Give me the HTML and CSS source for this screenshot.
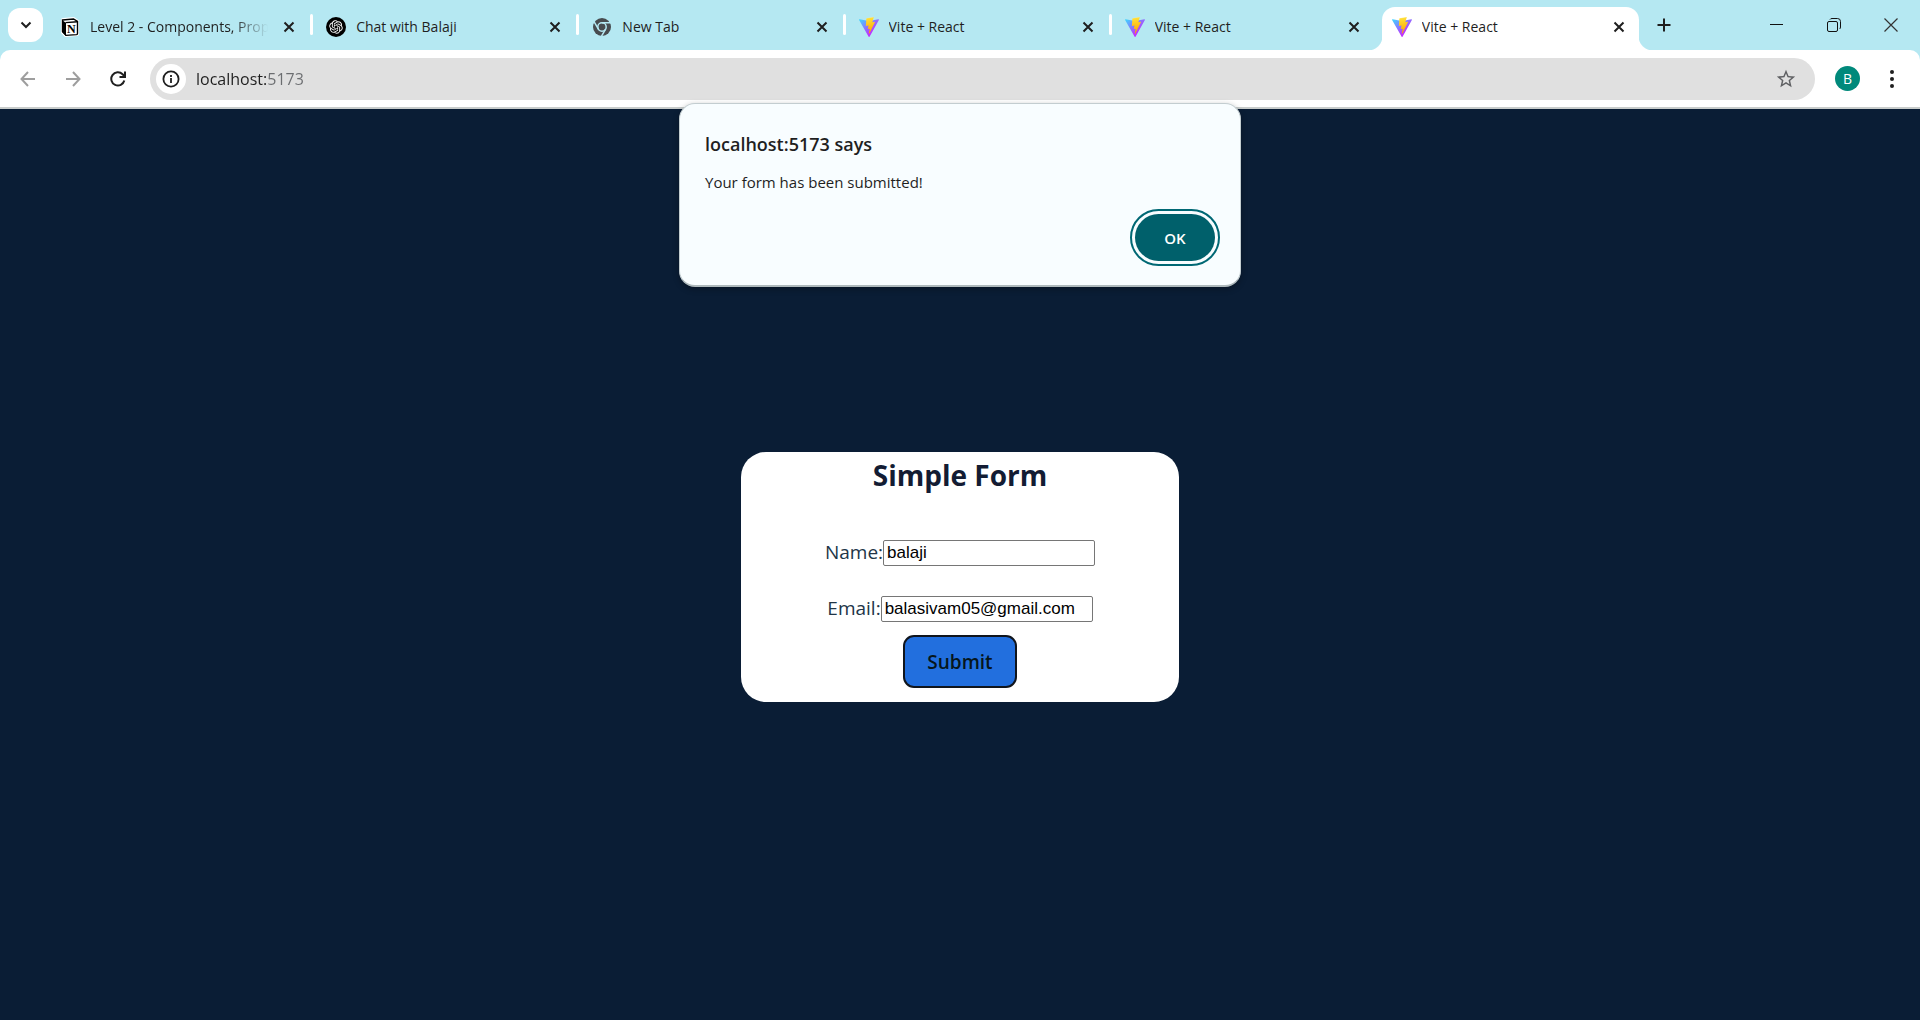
FILE: index.html
```html
<!DOCTYPE html>
<html lang="en">
<head>
<meta charset="utf-8">
<meta name="viewport" content="width=device-width, initial-scale=1">
<title>Vite + React</title>
<link rel="stylesheet" href="styles.css">
</head>
<body>
<svg class="defs" width="0" height="0" aria-hidden="true">
  <defs>
    <linearGradient id="vite-blue" x1="-1%" x2="58%" y1="8%" y2="78%"><stop offset="0" stop-color="#41d1ff"/><stop offset="1" stop-color="#bd34fe"/></linearGradient>
    <linearGradient id="vite-gold" x1="43%" x2="50%" y1="2%" y2="89%"><stop offset="0" stop-color="#ffea83"/><stop offset=".083" stop-color="#ffdd35"/><stop offset="1" stop-color="#ffa800"/></linearGradient>
    <symbol id="vite" viewBox="0 0 256 257">
      <path fill="url(#vite-blue)" d="M255.153 37.938L134.897 252.976c-2.483 4.44-8.862 4.466-11.382.048L.875 37.958c-2.746-4.814 1.371-10.646 6.827-9.67l120.385 21.517a6.537 6.537 0 0 0 2.322-.004l117.867-21.483c5.438-.991 9.574 4.796 6.877 9.62Z"/>
      <path fill="url(#vite-gold)" d="M185.432.063L96.44 17.501a3.268 3.268 0 0 0-2.634 3.014l-5.474 92.456a3.268 3.268 0 0 0 3.997 3.378l24.777-5.718c2.318-.535 4.413 1.507 3.936 3.838l-7.361 36.047c-.495 2.426 1.782 4.5 4.151 3.78l15.304-4.649c2.372-.72 4.652 1.36 4.15 3.788l-11.698 56.621c-.732 3.542 3.979 5.473 5.943 2.437l1.313-2.028l72.516-144.72c1.215-2.423-.88-5.186-3.54-4.672l-25.505 4.922c-2.396.462-4.435-1.77-3.759-4.114l16.646-57.705c.677-2.35-1.37-4.583-3.769-4.113Z"/>
    </symbol>
    <symbol id="cross" viewBox="0 0 12 12"><path d="M1.500 1.500l9 9M10.500 1.500l-9 9" fill="none" stroke="#1f1f1f" stroke-width="2"/></symbol>
  </defs>
</svg>

<header class="browser">
  <div class="tab-strip">
    <button class="tab-search" aria-label="Search tabs">
      <svg width="12" height="8" viewBox="0 0 12 8"><path d="M1.500 1.500L6 6l4.500-4.500" fill="none" stroke="#1f1f1f" stroke-width="2"/></svg>
    </button>
    <nav class="tabs">
      <div class="tab">
        <svg class="favicon" viewBox="0 0 20 20"><path d="M1 3Q1 1 3 1L14 0 19 3.500V17Q19 19 17 19L5 20 1 16Z" fill="#fff"/><path d="M2.500 3L13.500 2 17.500 4.500V16.500Q17.500 17.500 16.500 17.600L6 18.400 2.500 14.500Z" fill="#fff" stroke="#000" stroke-width="1.400"/><path d="M2 3L6 6V19L2 15Z" fill="#000"/><path d="M5.500 5.600L17.500 4.800" stroke="#000" stroke-width="1.400"/><text class="notion-letter" x="7" y="15.500">N</text></svg>
        <a class="tab-title faded" href="#">Level 2 - Components, Props</a>
        <button class="tab-close" aria-label="Close tab"><svg width="12" height="12"><use href="#cross"/></svg></button>
      </div>
      <div class="tab">
        <svg class="favicon" viewBox="0 0 40 40"><circle cx="20" cy="20" r="20" fill="#000"/><path transform="translate(6.500 6.500) scale(1.125)" fill="#fff" d="M22.282 9.821a5.985 5.985 0 0 0-.516-4.911 6.046 6.046 0 0 0-6.510-2.900A6.065 6.065 0 0 0 4.981 4.182a5.985 5.985 0 0 0-3.998 2.900 6.046 6.046 0 0 0 .743 7.097 5.980 5.980 0 0 0 .511 4.911 6.051 6.051 0 0 0 6.515 2.900A5.985 5.985 0 0 0 13.260 24a6.056 6.056 0 0 0 5.772-4.206 5.989 5.989 0 0 0 3.998-2.900 6.056 6.056 0 0 0-.748-7.073zm-9.022 12.608a4.476 4.476 0 0 1-2.876-1.041l.142-.080 4.778-2.758a.795.795 0 0 0 .393-.681v-6.737l2.020 1.169a.071.071 0 0 1 .038.052v5.583a4.504 4.504 0 0 1-4.495 4.494zm-9.661-4.125a4.471 4.471 0 0 1-.535-3.014l.142.085 4.783 2.758a.771.771 0 0 0 .781 0l5.843-3.369v2.332a.080.080 0 0 1-.033.062L9.740 19.950a4.499 4.499 0 0 1-6.141-1.646zM2.341 7.896a4.485 4.485 0 0 1 2.366-1.973V11.600a.766.766 0 0 0 .388.677l5.814 3.354-2.020 1.169a.076.076 0 0 1-.071 0l-4.830-2.787A4.504 4.504 0 0 1 2.341 7.872zm16.596 3.856L13.104 8.364 15.119 7.200a.076.076 0 0 1 .071 0l4.830 2.791a4.494 4.494 0 0 1-.677 8.104v-5.677a.790.790 0 0 0-.407-.667zm2.011-3.023l-.142-.085-4.774-2.782a.776.776 0 0 0-.785 0L9.409 9.230V6.897a.066.066 0 0 1 .028-.062l4.830-2.787a4.499 4.499 0 0 1 6.680 4.660zM8.307 12.863l-2.020-1.164a.080.080 0 0 1-.038-.057V6.074a4.499 4.499 0 0 1 7.376-3.454l-.142.081L8.704 5.459a.795.795 0 0 0-.393.681zm1.097-2.365l2.602-1.500 2.607 1.500v2.999l-2.597 1.500-2.607-1.500Z"/></svg>
        <a class="tab-title" href="#">Chat with Balaji</a>
        <button class="tab-close" aria-label="Close tab"><svg width="12" height="12"><use href="#cross"/></svg></button>
      </div>
      <div class="tab">
        <svg class="favicon" viewBox="0 0 20 20"><circle cx="10" cy="10" r="9" fill="#474b4f"/><g fill="none" stroke="#b5e8f2" stroke-width="1.500"><circle cx="10" cy="10" r="4.200"/><path d="M10 5.800H19M6.400 12.100L1.900 4.300M13.600 12.100L9.100 19.900"/></g></svg>
        <a class="tab-title" href="#">New Tab</a>
        <button class="tab-close" aria-label="Close tab"><svg width="12" height="12"><use href="#cross"/></svg></button>
      </div>
      <div class="tab">
        <svg class="favicon"><use href="#vite"/></svg>
        <a class="tab-title" href="#">Vite + React</a>
        <button class="tab-close" aria-label="Close tab"><svg width="12" height="12"><use href="#cross"/></svg></button>
      </div>
      <div class="tab before-active">
        <svg class="favicon"><use href="#vite"/></svg>
        <a class="tab-title" href="#">Vite + React</a>
        <button class="tab-close" aria-label="Close tab"><svg width="12" height="12"><use href="#cross"/></svg></button>
      </div>
      <div class="tab active">
        <svg class="favicon"><use href="#vite"/></svg>
        <a class="tab-title" href="#" aria-current="page">Vite + React</a>
        <button class="tab-close" aria-label="Close tab"><svg width="12" height="12"><use href="#cross"/></svg></button>
      </div>
    </nav>
    <button class="new-tab" aria-label="New tab"><svg width="14" height="14" viewBox="0 0 14 14"><path d="M7 .5v13M.5 7h13" stroke="#1f1f1f" stroke-width="2"/></svg></button>
    <div class="window-buttons">
      <button aria-label="Minimize"><svg width="14" height="14" viewBox="0 0 14 14"><path d="M0 6.500h13" stroke="#111"/></svg></button>
      <button aria-label="Restore"><svg width="14" height="14" viewBox="0 0 14 14" fill="none" stroke="#111"><rect x=".5" y="3.500" width="10" height="10" rx="1.500"/><path d="M3 1.500Q3.500.5 5 .5H10.500Q13.500.5 13.500 3.500V9Q13.500 10.500 12.500 11"/></svg></button>
      <button aria-label="Close window"><svg width="14" height="14" viewBox="0 0 14 14"><path d="M.5.5l13 13M13.500.5l-13 13" stroke="#333" stroke-width="1.200"/></svg></button>
    </div>
  </div>

  <div class="toolbar">
    <div class="nav-buttons">
      <button aria-label="Back"><svg width="16" height="16" viewBox="0 0 16 16" fill="none" stroke="#9e9e9e" stroke-width="2"><path d="M15 8H2M8 1L1.500 8 8 15"/></svg></button>
      <button aria-label="Forward"><svg width="16" height="16" viewBox="0 0 16 16" fill="none" stroke="#9e9e9e" stroke-width="2"><path d="M1 8h13M8 1l6.500 7L8 15"/></svg></button>
      <button aria-label="Reload"><svg width="16" height="16" viewBox="0 0 16 16" fill="none" stroke="#1f1f1f" stroke-width="2"><path d="M14.300 9.500A6.600 6.600 0 1 1 12.600 3.300L15 5.700M15 .5V6H9.500"/></svg></button>
    </div>
    <div class="omnibox">
      <button class="site-info" aria-label="View site information"><svg width="18" height="18" viewBox="0 0 18 18" fill="none" stroke="#1f1f1f" stroke-width="1.800"><circle cx="9" cy="9" r="7.600"/><path d="M9 8v5M9 5v2"/></svg></button>
      <input class="url" type="text" aria-label="Address" value="localhost:5173">
      <button class="bookmark" aria-label="Bookmark this tab"><svg width="22" height="22" viewBox="0 0 24 24" fill="#5f6063"><path d="M22 9.240l-7.190-.620L12 2 9.190 8.630 2 9.240l5.460 4.730L5.820 21 12 17.270 18.180 21l-1.630-7.030L22 9.240zM12 15.400l-3.760 2.270 1-4.280-3.320-2.880 4.380-.380L12 6.100l1.710 4.040 4.380.380-3.320 2.880 1 4.280L12 15.400z"/></svg></button>
    </div>
    <button class="avatar" aria-label="Profile">B</button>
    <button class="menu" aria-label="Menu"><svg width="4" height="18" viewBox="0 0 4 18" fill="#1f1f1f"><circle cx="2" cy="2" r="2"/><circle cx="2" cy="9" r="2"/><circle cx="2" cy="16" r="2"/></svg></button>
  </div>
</header>

<main class="page">
  <form class="card">
    <h1>Simple Form</h1>
    <div class="field"><label for="name">Name:</label><input id="name" type="text" value="balaji"></div>
    <div class="field"><label for="email">Email:</label><input id="email" type="email" value="balasivam05@gmail.com"></div>
    <button class="submit" type="submit">Submit</button>
  </form>
</main>

<dialog class="alert" open aria-labelledby="alert-title">
  <h2 id="alert-title">localhost:5173 says</h2>
  <p>Your form has been submitted!</p>
  <button class="ok" type="button">OK</button>
</dialog>
</body>
</html>
```
FILE: styles.css
```css
* { box-sizing: border-box; }

body {
  margin: 0;
  min-height: 100vh;
  display: flex;
  flex-direction: column;
  background: #0a1d35;
  color: #1f1f1f;
  font-family: "Open Sans", "Noto Sans", sans-serif;
}

button {
  display: flex;
  align-items: center;
  justify-content: center;
  padding: 0;
  border: 0;
  background: none;
  font-family: inherit;
}

svg { display: block; flex: none; }
.defs { position: absolute; }

/* Browser window frame */
.browser { background: #b5e8f2; }

.tab-strip {
  display: flex;
  align-items: center;
  height: 50px;
  padding-left: 8px;
}

.tab-search {
  flex: none;
  width: 35px;
  height: 34px;
  margin-right: 4px;
  border-radius: 12px;
  background: #fff;
}

.tabs {
  display: flex;
  align-self: stretch;
  flex: 0 1 1592px;
  min-width: 0;
}

.tab {
  position: relative;
  display: flex;
  align-items: center;
  flex: 1 1 266px;
  min-width: 0;
  margin-top: 7px;
  padding: 0 15px 4px 13px;
}

.tab::after {
  content: "";
  position: absolute;
  right: 0;
  top: 7px;
  width: 3px;
  height: 21px;
  border-radius: 2px;
  background: #fff;
}

.tab.before-active { margin-right: 4px; }
.tab.before-active::after { display: none; }

.tab.active {
  flex-basis: 257px;
  padding-left: 10px;
  padding-right: 11px;
  border-radius: 13px 13px 0 0;
  background: #fff;
}

.tab.active::before,
.tab.active::after {
  content: "";
  position: absolute;
  top: auto;
  bottom: 0;
  width: 14px;
  height: 14px;
  border-radius: 0;
}

.tab.active::before {
  left: -14px;
  background: radial-gradient(circle at 0 0, #b5e8f2 14px, #fff 15px);
}

.tab.active::after {
  right: -14px;
  background: radial-gradient(circle at 100% 0, #b5e8f2 14px, #fff 15px);
}

.favicon { width: 20px; height: 20px; }

.notion-letter {
  font: bold 12px "Liberation Serif", serif;
}

.tab-title {
  flex: 1;
  min-width: 0;
  margin: 0 12px 0 10px;
  overflow: hidden;
  white-space: nowrap;
  color: #1f1f1f;
  font-size: 14px;
  line-height: 20px;
  text-decoration: none;
}

.faded {
  -webkit-mask-image: linear-gradient(90deg, #000 80%, transparent);
  mask-image: linear-gradient(90deg, #000 80%, transparent);
}

.tab-close { width: 18px; height: 18px; }

.new-tab {
  flex: none;
  width: 34px;
  height: 34px;
  margin: 0 auto 0 8px;
}

.window-buttons { display: flex; padding-right: 1px; }
.window-buttons button { width: 57px; height: 50px; }

.toolbar {
  display: flex;
  align-items: center;
  height: 59px;
  border-bottom: 2px solid #c8cccb;
  border-radius: 10px 10px 0 0;
  background: #fff;
}

.nav-buttons {
  display: flex;
  padding: 0 10px 0 5px;
}

.nav-buttons button { width: 45px; height: 34px; }

.omnibox {
  display: flex;
  align-items: center;
  flex: 1;
  height: 42px;
  padding: 0 18px 0 6px;
  border-radius: 21px;
  background: #e0e0e0;
}

.site-info {
  flex: none;
  width: 30px;
  height: 30px;
  border-radius: 50%;
  background: #fff;
}

.url {
  flex: 1;
  min-width: 0;
  height: 32px;
  margin-left: 10px;
  padding: 0;
  border: 0;
  outline: 0;
  background: linear-gradient(90deg, #1f1f1f 71px, #6b6d70 71px);
  -webkit-background-clip: text;
  background-clip: text;
  color: transparent;
  font: 16px "Open Sans", "Noto Sans", sans-serif;
}

.avatar {
  flex: none;
  width: 25px;
  height: 25px;
  margin: 0 17px 0 20px;
  border-radius: 50%;
  background: #00897b;
  color: #fff;
  font-size: 14px;
}

.menu { width: 30px; height: 34px; margin-right: 13px; }

/* Page content */
.page {
  display: flex;
  flex: 1;
  align-items: center;
  justify-content: center;
  padding-top: 25px;
}

.card {
  display: flex;
  flex-direction: column;
  align-items: center;
  width: 438px;
  max-width: 100%;
  padding-bottom: 14px;
  border-radius: 25px;
  background: #fff;
}

.card h1 {
  margin: 0 0 42px;
  color: #131c33;
  font-size: 28px;
  font-weight: 700;
  line-height: 46px;
}

.field {
  display: flex;
  align-items: center;
  height: 26px;
  margin-bottom: 30px;
  color: #213547;
  font-size: 19px;
}

.field + .field { margin-bottom: 13px; }

.field label { line-height: 24px; padding-bottom: 2px; }

.field input {
  width: 212px;
  height: 26px;
  padding: 1px 3px;
  border: 1px solid #767676;
  border-radius: 2px;
  background: #fff;
  color: #000;
  font: 17px "Liberation Sans", Arial, sans-serif;
}

.submit {
  width: 114px;
  height: 53px;
  border: 2px solid #10151c;
  border-radius: 11px;
  background: #226fde;
  color: #06161c;
  font-size: 19px;
  font-weight: 600;
}

/* Alert floating over the page */
.alert {
  position: absolute;
  top: 103px;
  width: 562px;
  max-width: 100%;
  margin: 0 auto;
  padding: 25px 25px 24px;
  border: 1px solid #c3cdd0;
  border-bottom: 2px solid #aeb9bc;
  border-radius: 16px;
  background: #f8fdff;
  color: #1f1f1f;
  box-shadow: 0 2px 6px rgba(0, 0, 0, .3);
}

.alert h2 {
  margin: 0 0 11px;
  font-size: 18px;
  font-weight: 600;
  line-height: 30px;
}

.alert p {
  margin: 0 0 20px;
  font-size: 15px;
  line-height: 24px;
}

.ok {
  width: 80px;
  height: 47px;
  margin-left: auto;
  border-radius: 24px;
  outline: 2px solid #006874;
  outline-offset: 3px;
  background: #00606b;
  color: #fff;
  font-size: 15px;
  font-weight: 600;
}
```
